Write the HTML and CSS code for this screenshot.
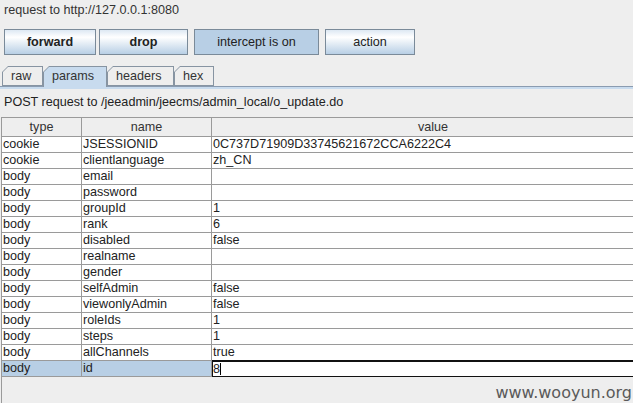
FILE: index.html
```html
<!DOCTYPE html>
<html>
<head>
<meta charset="utf-8">
<link rel="stylesheet" href="styles.css">
</head>
<body>
<div class="title">request to http://127.0.0.1:8080</div>
<div class="toolbar">
  <div class="btn bold w-fwd">forward</div>
  <div class="btn bold w-drop">drop</div>
  <div class="btn on w-int">intercept is on</div>
  <div class="btn w-act">action</div>
</div>
<div class="tabs">
  <div class="tab w-raw"><span>raw</span></div>
  <div class="tab sel w-params"><span>params</span></div>
  <div class="tab w-headers"><span>headers</span></div>
  <div class="tab w-hex"><span>hex</span></div>
</div>
<div class="panel">
  <div class="desc">POST request to /jeeadmin/jeecms/admin_local/o_update.do</div>
  <div class="scroll">
    <div class="hrow">
      <div class="c1">type</div><div class="c2">name</div><div class="c3">value</div>
    </div>
    <div class="row"><div class="c1">cookie</div><div class="c2">JSESSIONID</div><div class="c3">0C737D71909D33745621672CCA6222C4</div></div>
    <div class="row"><div class="c1">cookie</div><div class="c2">clientlanguage</div><div class="c3">zh_CN</div></div>
    <div class="row"><div class="c1">body</div><div class="c2">email</div><div class="c3"></div></div>
    <div class="row"><div class="c1">body</div><div class="c2">password</div><div class="c3"></div></div>
    <div class="row"><div class="c1">body</div><div class="c2">groupId</div><div class="c3">1</div></div>
    <div class="row"><div class="c1">body</div><div class="c2">rank</div><div class="c3">6</div></div>
    <div class="row"><div class="c1">body</div><div class="c2">disabled</div><div class="c3">false</div></div>
    <div class="row"><div class="c1">body</div><div class="c2">realname</div><div class="c3"></div></div>
    <div class="row"><div class="c1">body</div><div class="c2">gender</div><div class="c3"></div></div>
    <div class="row"><div class="c1">body</div><div class="c2">selfAdmin</div><div class="c3">false</div></div>
    <div class="row"><div class="c1">body</div><div class="c2">viewonlyAdmin</div><div class="c3">false</div></div>
    <div class="row"><div class="c1">body</div><div class="c2">roleIds</div><div class="c3">1</div></div>
    <div class="row"><div class="c1">body</div><div class="c2">steps</div><div class="c3">1</div></div>
    <div class="row"><div class="c1">body</div><div class="c2">allChannels</div><div class="c3">true</div></div>
    <div class="row sel"><div class="c1">body</div><div class="c2">id</div><div class="c3 edit">8<span class="caret"></span></div></div>
  </div>
</div>
<div class="watermark">www.wooyun.org</div>
</body>
</html>
```
FILE: styles.css
```css
* { box-sizing: border-box; }
html, body { margin: 0; height: 100%; overflow: hidden; }
body {
  background: #eeeeee;
  font: 12.6px "Liberation Sans", Arial, sans-serif;
  color: #333333;
  display: flex;
  flex-direction: column;
  position: relative;
}
.title { height: 20px; line-height: 20px; padding-left: 4px; flex: none; }
.toolbar { display: flex; margin-top: 9px; height: 26px; padding-left: 4px; flex: none; }
.btn {
  height: 26px;
  border: 1px solid #7a8a99;
  background: linear-gradient(#dde8f3, #ffffff 30%, #b8cfe5);
  display: flex;
  align-items: center;
  justify-content: center;
  color: #222222;
}
.btn.bold { font-weight: bold; }
.btn.on { background: #b8cfe5; }
.w-fwd { width: 92px; }
.w-drop { width: 89px; margin-left: 3px; }
.w-int { width: 125px; margin-left: 6px; }
.w-act { width: 90px; margin-left: 6px; }

.tabs {
  display: flex;
  align-items: flex-start;
  margin-top: 11px;
  height: 21px;
  padding-left: 2px;
  margin-bottom: -1px;
  position: relative;
  z-index: 1;
  flex: none;
}
.tab {
  height: 20px;
  background: #8794a2;
  padding: 1px 1px 1px 1px;
  clip-path: polygon(0 6px, 6px 0, 100% 0, 100% 100%, 0 100%);
}
.tab span {
  display: block;
  height: 100%;
  background: #eeeeee;
  clip-path: polygon(0 5px, 5px 0, 100% 0, 100% 100%, 0 100%);
  padding-left: 8px;
  line-height: 18px;
  color: #333333;
}
.tab.sel { height: 21px; padding-bottom: 0; }
.tab.sel span { background: #c8dbee; }
.w-raw { width: 41px; }
.w-params { width: 64px; }
.w-headers { width: 67px; }
.w-hex { width: 40px; }

.panel {
  flex: 1;
  min-height: 0;
  display: flex;
  flex-direction: column;
  border-top: 1px solid #8a9bb0;
  padding-top: 2px;
  background: linear-gradient(#c8dbee, #c8dbee) top / 100% 2px no-repeat, #eeeeee;
}
.desc { height: 28px; padding: 6px 0 0 4px; line-height: 14px; color: #222222; flex: none; }
.scroll {
  flex: 1;
  width: 654px;
  margin-left: 1px;
  border-left: 1px solid #9a9a9a;
  border-top: 1px solid #9a9a9a;
}
.hrow, .row { display: flex; }
.hrow { height: 19px; }
.row { height: 16px; }
.c1, .c2, .c3 {
  border-right: 1px solid #9a9a9a;
  border-bottom: 1px solid #9a9a9a;
  white-space: nowrap;
  overflow: hidden;
}
.c1 { width: 80px; flex: none; }
.c2 { width: 130px; flex: none; }
.c3 { flex: 1; }
.hrow > div { text-align: center; line-height: 18px; background: #eeeeee; color: #333333; }
.row > div { background: #ffffff; line-height: 15px; padding-left: 1px; color: #222222; }
.row.sel .c1, .row.sel .c2 { background: #b8cfe5; }
.row.sel .c3.edit {
  background: #ffffff;
  border-bottom-color: #111111;
  box-shadow: 0 -1px 0 #111111, inset 1px 0 0 #111111, inset 0 1px 0 #111111;
  padding-left: 1px;
  line-height: 16px;
}
.caret { display: inline-block; width: 1px; height: 12px; background: #000000; vertical-align: -2px; }

.watermark {
  position: absolute;
  right: 1px;
  bottom: 1px;
  font: 16px "DejaVu Sans", sans-serif;
  color: #5a5a5a;
  line-height: 19px;
}
```
